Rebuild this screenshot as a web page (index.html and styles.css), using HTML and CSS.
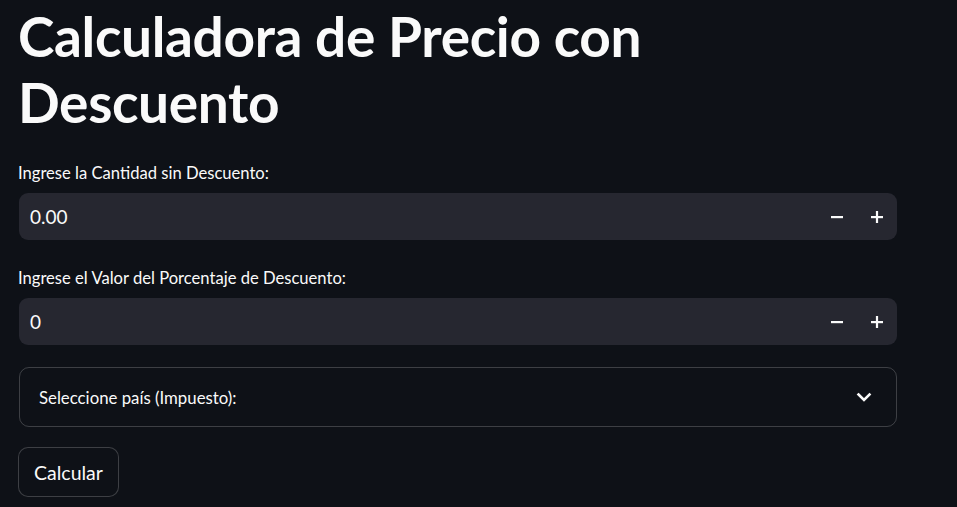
FILE: index.html
```html
<!DOCTYPE html>
<html lang="es">
<head>
<meta charset="utf-8">
<title>Calculadora de Precio con Descuento</title>
<link rel="stylesheet" href="styles.css">
</head>
<body>
<main class="app">
  <h1 class="title">Calculadora de Precio con Descuento</h1>

  <div class="field">
    <label class="label">Ingrese la Cantidad sin Descuento:</label>
    <div class="numinput">
      <span class="value">0.00</span>
      <button class="step" aria-label="minus">
        <svg width="12" height="12" viewBox="0 0 12 12"><rect x="0" y="5" width="12" height="2.2" fill="#fafafa"/></svg>
      </button>
      <button class="step" aria-label="plus">
        <svg width="12" height="12" viewBox="0 0 12 12"><rect x="0" y="5" width="12" height="2.2" fill="#fafafa"/><rect x="4.9" y="0" width="2.2" height="12" fill="#fafafa"/></svg>
      </button>
    </div>
  </div>

  <div class="field">
    <label class="label">Ingrese el Valor del Porcentaje de Descuento:</label>
    <div class="numinput">
      <span class="value">0</span>
      <button class="step" aria-label="minus">
        <svg width="12" height="12" viewBox="0 0 12 12"><rect x="0" y="5" width="12" height="2.2" fill="#fafafa"/></svg>
      </button>
      <button class="step" aria-label="plus">
        <svg width="12" height="12" viewBox="0 0 12 12"><rect x="0" y="5" width="12" height="2.2" fill="#fafafa"/><rect x="4.9" y="0" width="2.2" height="12" fill="#fafafa"/></svg>
      </button>
    </div>
  </div>

  <div class="expander">
    <span class="exp-label">Seleccione país (Impuesto):</span>
    <svg class="chev" width="24" height="24" viewBox="0 0 24 24"><path d="M6.5 9.5 L12 15 L17.5 9.5" fill="none" stroke="#fafafa" stroke-width="2.6" stroke-linecap="square"/></svg>
  </div>

  <div class="actions">
    <button class="btn">Calcular</button>
  </div>
</main>
</body>
</html>
```
FILE: styles.css
```css
* { box-sizing: border-box; }
html, body { margin: 0; padding: 0; background: #0e1117; }
body {
  color: #fafafa;
  font-family: "Lato", "Noto Sans", sans-serif;
  width: 957px;
  height: 507px;
  overflow: hidden;
}
.app {
  display: flex;
  flex-direction: column;
  gap: 20px;
  width: 879px;
  margin-left: 18px;
  padding-top: 3px;
}
.title {
  margin: 0;
  font-size: 55px;
  font-weight: 700;
  line-height: 66px;
  letter-spacing: -0.35px;
}
.field { display: flex; flex-direction: column; }
.label {
  display: flex;
  align-items: center;
  min-height: 36px;
  margin-bottom: 2px;
  font-size: 16.6px;
}
.numinput {
  display: flex;
  align-items: center;
  height: 47px;
  background: #262730;
  border-radius: 9px;
  padding-left: 11px;
  margin-left: 1px;
}
.value { flex: 1; font-size: 19px; }
.step {
  width: 40px;
  height: 47px;
  display: flex;
  align-items: center;
  justify-content: center;
  background: transparent;
  border: 0;
  padding: 0;
}
.expander {
  display: flex;
  align-items: center;
  justify-content: space-between;
  height: 60px;
  border: 1px solid rgba(250, 250, 250, 0.2);
  border-radius: 10px;
  padding: 0 20px 0 19px;
  margin-top: 2px;
  margin-left: 1px;
}
.exp-label { font-size: 16.8px; }
.actions { display: flex; }
.btn {
  font-family: inherit;
  font-size: 19.5px;
  color: #fafafa;
  background: #0e1117;
  border: 1px solid rgba(250, 250, 250, 0.2);
  border-radius: 10px;
  height: 50px;
  padding: 0 15px;
}
```
